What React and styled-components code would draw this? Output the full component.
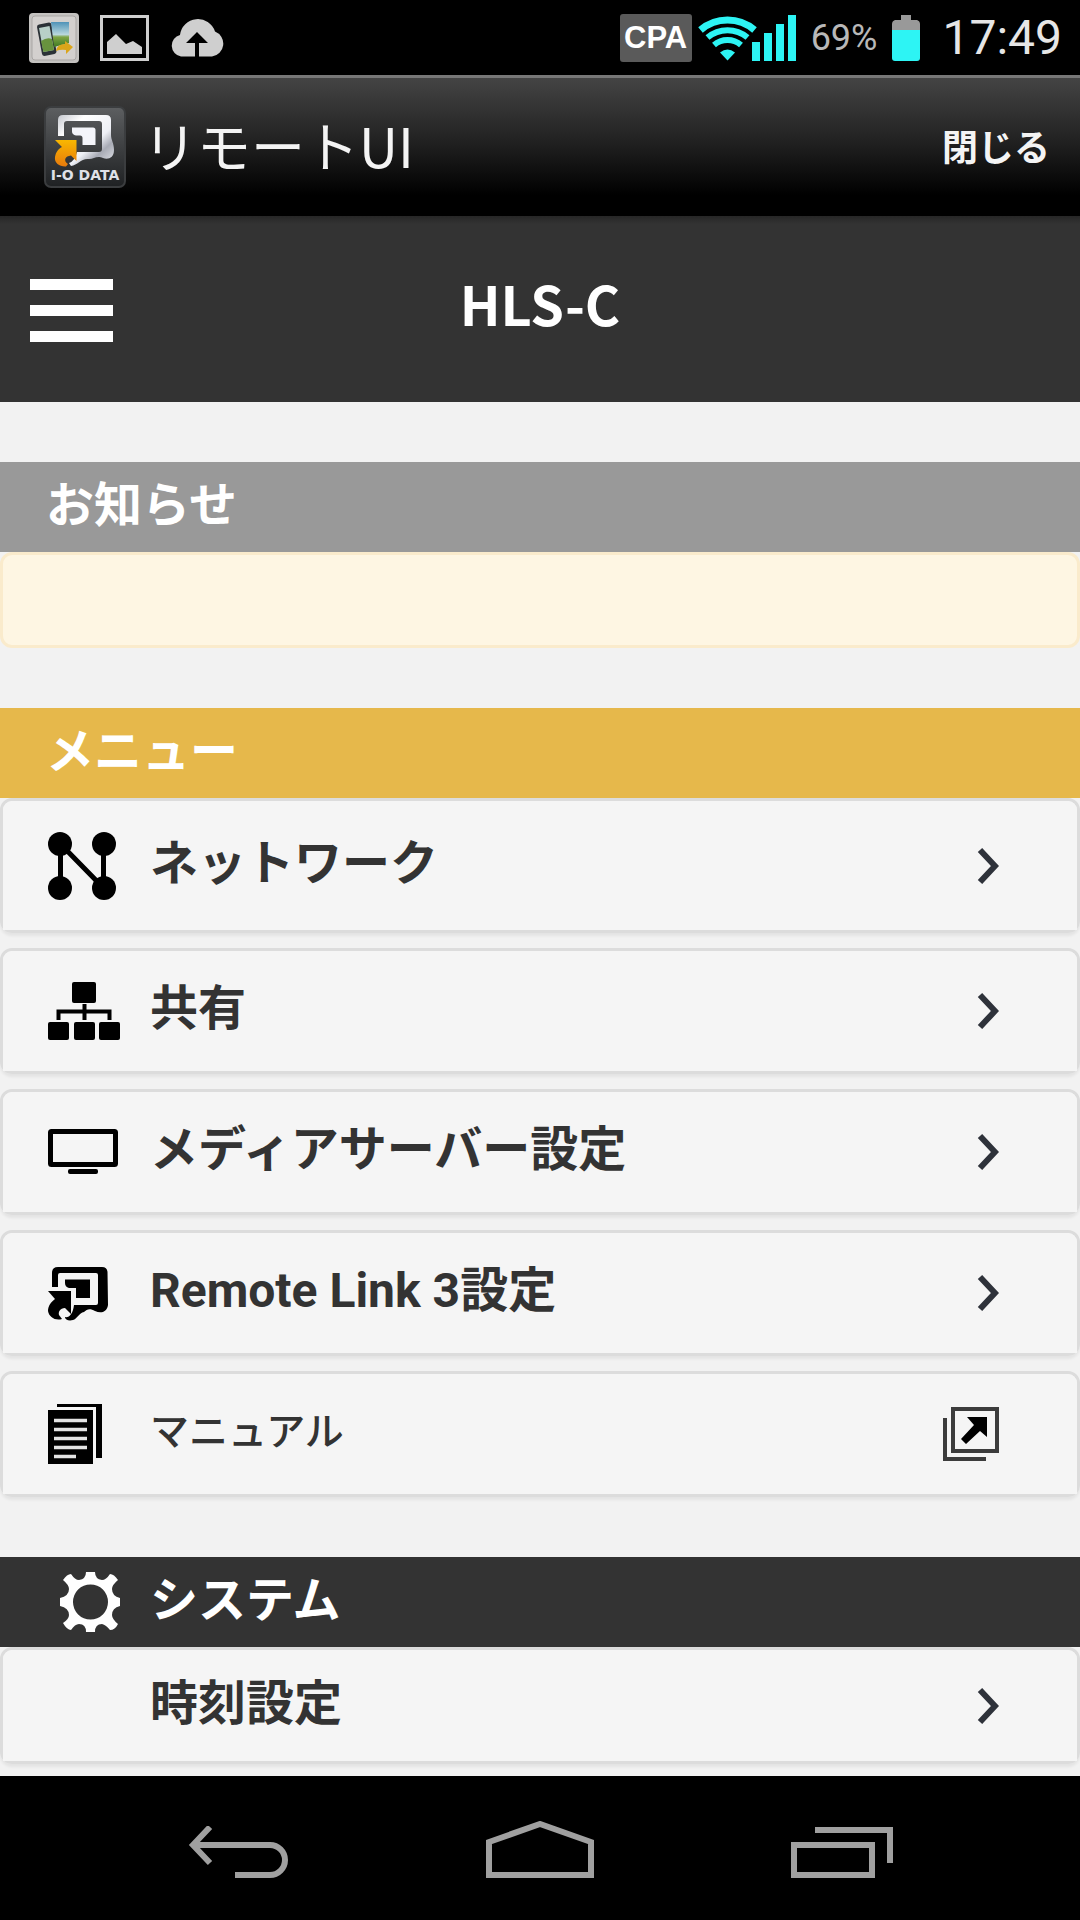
import React from 'react';
import styled, { createGlobalStyle } from 'styled-components';

const GlobalStyle = createGlobalStyle`
  * {
    box-sizing: border-box;
  }

  body {
    margin: 0;
    background: #f2f2f2;
    color: #333;
    font-family: "Noto Sans CJK JP", sans-serif;
  }
`;

const Screen = styled.div`
  display: flex;
  flex-direction: column;
  min-height: 100vh;
`;

const StatusBar = styled.div`
  display: flex;
  align-items: center;
  justify-content: space-between;
  height: 75px;
  padding: 0 18px 0 29px;
  background: #000;
`;

const StatusGroup = styled.div`
  display: flex;
  align-items: center;
  gap: ${props => props.gap}px;
`;

const Carrier = styled.span`
  width: 72px;
  border-radius: 3px;
  background: #5a5a5a;
  color: #fff;
  font: bold 31px/48px "Liberation Sans", sans-serif;
  text-align: center;
`;

const StatusText = styled.span`
  color: ${props => props.color};
  font: ${props => props.size}px/60px Roboto, "Noto Sans CJK JP", sans-serif;
`;

const AppBar = styled.header`
  display: flex;
  align-items: center;
  height: 141px;
  padding: 0 30px 0 44px;
  border-top: 3px solid #777;
  background: linear-gradient(#444 0%, #222 45%, #000 85%);
  color: #f4f4f4;
`;

const AppName = styled.h1`
  flex: 1;
  margin: 0 0 0 17px;
  padding-bottom: 4px;
  font-size: 54px;
  font-weight: 400;
  line-height: 72px;
`;

const CloseButton = styled.button`
  padding: 0 0 4px;
  border: 0;
  background: none;
  color: #f4f4f4;
  font: 700 36px/48px "Noto Sans CJK JP", sans-serif;
`;

const PageBar = styled.div`
  display: grid;
  grid-template-columns: 1fr auto 1fr;
  align-items: center;
  height: 186px;
  padding: 2px 30px 0;
  background: linear-gradient(#262626, #333 8px);
`;

const MenuButton = styled.button`
  display: flex;
  flex-direction: column;
  gap: 15px;
  width: 83px;
  padding: 0;
  border: 0;
  background: none;
`;

const MenuBar = styled.span`
  height: 11px;
  background: #fff;
`;

const PageTitle = styled.h2`
  margin: 0;
  padding-bottom: 14px;
  color: #fff;
  font-size: 54px;
  font-weight: 700;
  line-height: 72px;
`;

const Content = styled.main`
  flex: 1;
  padding-bottom: 12px;
`;

const Section = styled.section`
  margin-top: 60px;
`;

const SectionTitle = styled.h3`
  display: flex;
  align-items: center;
  height: 90px;
  margin: 0;
  padding-left: ${props => (props.indent ? 60 : 46)}px;
  background: ${props => props.color};
  color: #fff;
  font-size: 48px;
  font-weight: 700;
`;

const SectionLabel = styled.span`
  padding-bottom: 12px;
  margin-left: ${props => (props.indent ? 30 : 0)}px;
  line-height: 72px;
`;

const Notice = styled.div`
  height: 96px;
  border: 3px solid #faebcc;
  border-radius: 12px;
  background: #fef6e3;
`;

const List = styled.ul`
  display: flex;
  flex-direction: column;
  gap: 15px;
  margin: 0;
  padding: 0;
  list-style: none;
`;

const Row = styled.li`
  border: 3px solid #dcdcdc;
  border-radius: 12px;
  box-shadow: 0 3px 3px rgba(0, 0, 0, 0.06);
`;

const RowLink = styled.a`
  display: flex;
  align-items: center;
  min-height: ${props => props.height}px;
  padding: 0 78px 0 45px;
  border-radius: 9px 9px 0 0;
  background: #f5f5f5;
  color: #333;
  text-decoration: none;
`;

const IconCell = styled.span`
  display: flex;
  width: 102px;
`;

const RowLabel = styled.span`
  flex: 1;
  padding-bottom: 4px;
  font-family: Roboto, "Noto Sans CJK JP", sans-serif;
  font-size: ${props => (props.small ? 39 : 48)}px;
  font-weight: ${props => (props.small ? 500 : 700)};
  line-height: 64px;
`;

const NavBar = styled.nav`
  display: flex;
  justify-content: center;
  height: 144px;
  background: #000;
`;

const NavButton = styled.button`
  display: flex;
  flex: 0 0 28%;
  align-items: flex-end;
  justify-content: center;
  padding: 0 0 42px;
  border: 0;
  background: none;
`;

function TransferIcon() {
  return (
    <svg width="50" height="50" viewBox="0 0 50 50">
      <defs>
        <linearGradient id="sky" x1="0" y1="0" x2="0" y2="1">
          <stop offset="0" stopColor="#4f93b8" />
          <stop offset="0.5" stopColor="#b9d7dd" />
          <stop offset="0.6" stopColor="#7fa545" />
          <stop offset="1" stopColor="#3f7a22" />
        </linearGradient>
      </defs>
      <rect width="50" height="50" rx="4" fill="#c4c2c0" />
      <rect x="3" y="3" width="44" height="44" rx="3" fill="#d3d0ce" stroke="#aaa7a5" />
      <path d="M8 14q0-2 2-2.400l10-2q2 0 2.500 2l5 27q0 2-2 2.400l-10 2q-2 0-2.500-2z" fill="#2b3136" />
      <path d="M10 15l10.500-2 4.500 24-10.500 2z" fill="#b8d0c8" />
      <path d="M12 28q6-4 11-2l2 11-10.500 2z" fill="#68933e" />
      <path d="M22 9h18v21l-15 4z" fill="url(#sky)" />
      <path d="M27 38q1-7 9-7v-3l8 6-7 7v-4q-5-1-10 1z" fill="#dba51a" />
    </svg>
  );
}

function PictureIcon() {
  return (
    <svg width="49" height="46" viewBox="0 0 49 46">
      <rect x="1.500" y="1.500" width="46" height="43" fill="none" stroke="#cfcfcf" strokeWidth="3" />
      <path d="M7 39V27l9-8 10 10 7-3 9 6v7z" fill="#cfcfcf" />
    </svg>
  );
}

function CloudIcon() {
  return (
    <svg width="54" height="40" viewBox="0 0 54 40">
      <path d="M11 38.500A11 11 0 0 1 10 17 18 18 0 0 1 45 13.500 13 13 0 0 1 42 38.500H29V25h9L27 14 16 25h9v13.500z" fill="#cfcfcf" />
    </svg>
  );
}

function WifiIcon() {
  return (
    <svg width="98" height="46" viewBox="0 0 98 46" fill="none" stroke="#2df4f4">
      <path d="M2.500 15A41.500 41.500 0 0 1 56.500 15" strokeWidth="7" />
      <path d="M9.500 22.500A31 31 0 0 1 49.500 22.500" strokeWidth="6" />
      <path d="M16 30A21 21 0 0 1 43 30" strokeWidth="6" />
      <path d="M22 37.500Q29.500 31.500 37 37.500L29.500 45.500z" fill="#2df4f4" stroke="none" />
      <path d="M54 27h8v19h-8zM66 18h8v28h-8zM78 9h8v37h-8zM90 0h8v46h-8z" fill="#2df4f4" stroke="none" />
    </svg>
  );
}

function BatteryIcon() {
  return (
    <svg width="28" height="46" viewBox="0 0 28 46">
      <path d="M9 0h10v5h6q3 1 3 4v7H0V9q0-3 3-4h6z" fill="#999" />
      <path d="M0 15h28v28q0 3-3 3H3q-3 0-3-3z" fill="#2df4f4" />
    </svg>
  );
}

function AppLogo() {
  return (
    <svg width="82" height="82" viewBox="0 0 82 82">
      <defs>
        <linearGradient id="tile" x1="0" y1="0" x2="0" y2="1">
          <stop offset="0" stopColor="#5d5f61" />
          <stop offset="1" stopColor="#1f2123" />
        </linearGradient>
        <linearGradient id="silver" x1="0" y1="0" x2="1" y2="1">
          <stop offset="0" stopColor="#c6c9d0" />
          <stop offset="0.25" stopColor="#fff" />
          <stop offset="0.6" stopColor="#eef0f6" />
          <stop offset="0.75" stopColor="#a8abb5" />
          <stop offset="1" stopColor="#e8eaf0" />
        </linearGradient>
        <linearGradient id="orange" x1="0" y1="0" x2="0" y2="1">
          <stop offset="0" stopColor="#f9b700" />
          <stop offset="1" stopColor="#e77a0c" />
        </linearGradient>
      </defs>
      <rect x="1" y="1" width="80" height="80" rx="6" fill="url(#tile)" stroke="#3b3d3f" strokeWidth="2" />
      <path d="M14 30V14q0-5 5-5h43q5 0 5 5v15c0 5 3 8 3 15 0 8-6 10-11 8-6-3-9 1-14 1-8-1-11 6-18 7l-2-3q6-2 8-11h22q3 0 3-3V18q0-3-3-3H23q-3 0-3 3v12z" fill="url(#silver)" />
      <path d="M28 21.500h21q2.500 0 2.500 2.500v15H38.500v-7q0-2.500-2.500-2.500h-4q-4-1-4-4z" fill="#f4f5fa" />
      <path d="M11 34h21.500v21L27 49.500C21 50 19 55 24 58L22 60.500C16 61 10 57 11 51 12 46 14 43 18 41z" fill="url(#orange)" />
      <text x="41" y="74" textAnchor="middle" fill="#dfe1e8" fontFamily="DejaVu Sans, sans-serif" fontSize="14" fontWeight="700">I-O DATA</text>
    </svg>
  );
}

function NetworkIcon() {
  return (
    <svg width="68" height="68" viewBox="0 0 68 68">
      <path d="M12.500 12v44M55.500 12v44M12.500 12l43 44" stroke="#000" strokeWidth="5" />
      <circle cx="12" cy="12" r="12" />
      <circle cx="56" cy="12" r="12" />
      <circle cx="12" cy="56" r="12" />
      <circle cx="56" cy="56" r="12" />
    </svg>
  );
}

function ShareIcon() {
  return (
    <svg width="72" height="58" viewBox="0 0 72 58">
      <rect x="24" y="0" width="24" height="21" rx="2" />
      <path d="M10.500 38V29.500h51V38M36.500 22v16" fill="none" stroke="#000" strokeWidth="4" />
      <rect x="0" y="40" width="21" height="18" rx="2" />
      <rect x="26" y="40" width="21" height="18" rx="2" />
      <rect x="51" y="40" width="21" height="18" rx="2" />
    </svg>
  );
}

function TvIcon() {
  return (
    <svg width="70" height="46" viewBox="0 0 70 46">
      <rect x="2.500" y="2.500" width="65" height="33" rx="1" fill="none" stroke="#000" strokeWidth="5" />
      <rect x="20" y="40" width="30" height="5" rx="2" />
    </svg>
  );
}

function RemoteLinkIcon() {
  return (
    <svg width="60" height="55" viewBox="0 0 60 55">
      <path d="M4 21V7q0-6 6-6h44q5 0 5.500 5L60 39c-1 7-7 9-13 6-5-3-8-2-11 1-5 1-7 7-11 8-4 1-8 0-8-3 4 1 8-3 9-12h22q2 0 2-2V9q0-2-2-2H12q-2 0-2 2v12z" />
      <path d="M17 13.500h25v18.500H28V22h-7q-4-1-4-5z" />
      <path d="M0 25h23v23l-6-6c-5 0-7 4-6 7l3 4c-7 2-13-2-14-8 0-5 3-9 7-12z" />
    </svg>
  );
}

function ManualIcon() {
  return (
    <svg width="54" height="60" viewBox="0 0 54 60">
      <path d="M9 0h45v54h-6V3H9zM0 6h45v54H0z" />
      <path d="M6 16.500h33M6 25.500h33M6 34.500h33M6 43.500h33M6 52.500h22" stroke="#e4e4e4" strokeWidth="3.500" />
    </svg>
  );
}

function GearIcon() {
  return (
    <svg width="60" height="60" viewBox="0 0 60 60">
      <path
        fill="#fff"
        fillRule="evenodd"
        d="M26 0h9q0 7 7 8 4 0 8-6 4 0 8 6-6 5-6 9 0 7 8 9v8q-8 2-8 9 0 4 6 9-3 6-8 6-4-5-8-6-7 0-7 8h-9q0-8-7-8-4 0-8 6-4 0-8-7 6-4 6-8 0-7-9-9v-8q9-2 9-9 0-4-6-9 4-6 8-6 4 6 8 6 7-1 7-8zM30.500 12.500a17.500 17.500 0 1 0 0 35 17.500 17.500 0 1 0 0-35z"
      />
    </svg>
  );
}

function ChevronIcon() {
  return (
    <svg width="22" height="38" viewBox="0 0 22 38">
      <path d="M3 3l15 16L3 35" fill="none" stroke="#2e323a" strokeWidth="6" />
    </svg>
  );
}

function ExternalIcon() {
  return (
    <svg width="58" height="56" viewBox="0 0 58 56">
      <rect x="12" y="3" width="44" height="42" fill="none" stroke="#3c3c3c" strokeWidth="4" />
      <path d="M4 12v41h41" fill="none" stroke="#3c3c3c" strokeWidth="4" />
      <path d="M26 11h20v20l-7-6-14 13-5-5 13-14z" />
    </svg>
  );
}

const menuItems = [
  { label: 'ネットワーク', icon: <NetworkIcon />, height: 129 },
  { label: '共有', icon: <ShareIcon />, height: 120 },
  { label: 'メディアサーバー設定', icon: <TvIcon />, height: 120 },
  { label: 'Remote Link 3設定', icon: <RemoteLinkIcon />, height: 120 },
  { label: 'マニュアル', icon: <ManualIcon />, height: 120, external: true }
];

const systemItems = [
  { label: '時刻設定', icon: null, height: 111 }
];

function MenuList(props) {
  return (
    <List>
      {props.items.map((item) => (
        <Row key={item.label}>
          <RowLink href="#" height={item.height}>
            <IconCell>{item.icon}</IconCell>
            <RowLabel small={item.external}>{item.label}</RowLabel>
            {item.external ? <ExternalIcon /> : <ChevronIcon />}
          </RowLink>
        </Row>
      ))}
    </List>
  );
}

function SystemNav() {
  return (
    <NavBar>
      <NavButton aria-label="戻る">
        <svg width="100" height="52" viewBox="0 0 100 52" fill="none" stroke="#a0a0a0" strokeWidth="6">
          <path d="M22 1L5 19l17 18" />
          <path d="M5 19h77a15 15 0 0 1 0 30H47" />
        </svg>
      </NavButton>
      <NavButton aria-label="ホーム">
        <svg width="108" height="57" viewBox="0 0 108 57" fill="none" stroke="#a0a0a0" strokeWidth="6">
          <path d="M3 54V21L54 3l51 18v33z" />
        </svg>
      </NavButton>
      <NavButton aria-label="履歴">
        <svg width="102" height="51" viewBox="0 0 102 51" fill="none" stroke="#a0a0a0" strokeWidth="6">
          <path d="M3 18h78v30H3zM24 3h75v33" />
        </svg>
      </NavButton>
    </NavBar>
  );
}

function App() {
  return (
    <Screen>
      <GlobalStyle />
      <StatusBar>
        <StatusGroup gap={21}>
          <TransferIcon />
          <PictureIcon />
          <CloudIcon />
        </StatusGroup>
        <StatusGroup gap={22}>
          <StatusGroup gap={15}>
            <StatusGroup gap={6}>
              <Carrier>CPA</Carrier>
              <WifiIcon />
            </StatusGroup>
            <StatusText size={36} color="#b8b8b8">69%</StatusText>
            <BatteryIcon />
          </StatusGroup>
          <StatusText size={48} color="#e6e6e6">17:49</StatusText>
        </StatusGroup>
      </StatusBar>
      <AppBar>
        <AppLogo />
        <AppName>リモートUI</AppName>
        <CloseButton>閉じる</CloseButton>
      </AppBar>
      <PageBar>
        <MenuButton aria-label="メニュー">
          <MenuBar />
          <MenuBar />
          <MenuBar />
        </MenuButton>
        <PageTitle>HLS-C</PageTitle>
      </PageBar>
      <Content>
        <Section>
          <SectionTitle color="#999">
            <SectionLabel>お知らせ</SectionLabel>
          </SectionTitle>
          <Notice />
        </Section>
        <Section>
          <SectionTitle color="#e6b84b">
            <SectionLabel>メニュー</SectionLabel>
          </SectionTitle>
          <MenuList items={menuItems} />
        </Section>
        <Section>
          <SectionTitle color="#333" indent>
            <GearIcon />
            <SectionLabel indent>システム</SectionLabel>
          </SectionTitle>
          <MenuList items={systemItems} />
        </Section>
      </Content>
      <SystemNav />
    </Screen>
  );
}

export default App;
